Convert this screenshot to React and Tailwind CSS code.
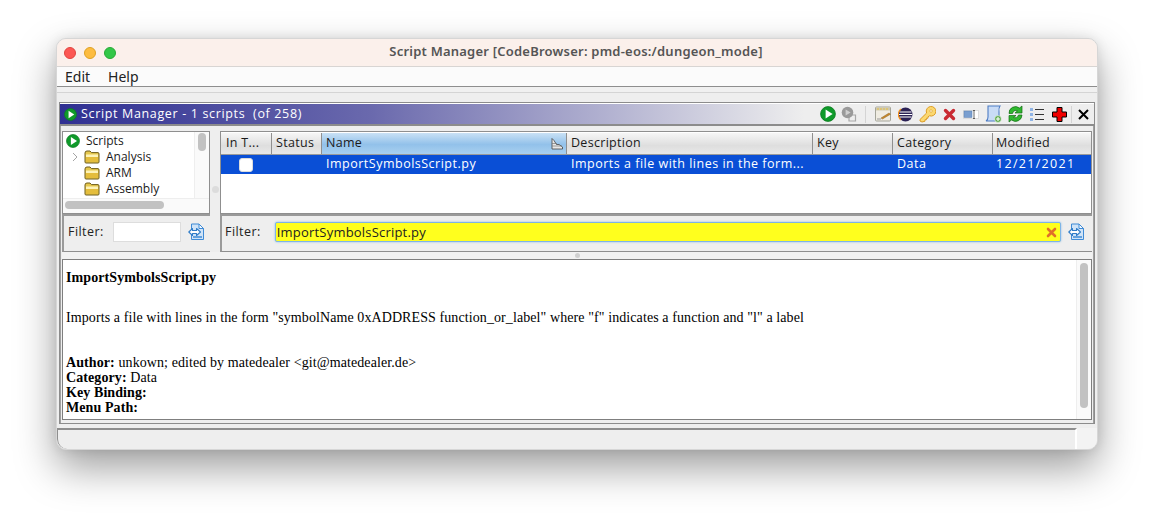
import React from "react";

const ui = { fontFamily: '"Open Sans","Noto Sans",sans-serif' };

const Play = ({ s = 14 }) => (
  <svg width={s} height={s} viewBox="0 0 16 16" className="shrink-0">
    <circle cx="8" cy="8" r="7.4" fill="#0f9a2a" stroke="#0b7a20" strokeWidth="0.8" />
    <path d="M5.6 3.4 L12.6 8 L5.6 12.6 Z" fill="#fff" />
  </svg>
);

const Folder = () => (
  <svg width="16" height="14" viewBox="0 0 16 14" className="shrink-0">
    <path d="M1 3 Q1 1 3 1 H6 L7.5 2.6 H14 Q15 2.6 15 4 V12 Q15 13 14 13 H2 Q1 13 1 12 Z" fill="#e6c84e" stroke="#6e5c1a" strokeWidth="1" />
    <path d="M2 5.5 H14 V12 H2 Z" fill="#e4bd3c" />
    <path d="M2 4.5 H14 V7 H2 Z" fill="#fdf3b8" />
  </svg>
);

const RefreshDoc = () => (
  <svg width="17" height="18" viewBox="0 0 17 18" className="shrink-0">
    <path d="M3.5 1 H11 L15.5 5.5 V16.5 H3.5 Z" fill="#cfe3f7" stroke="#3f8bd6" strokeWidth="1" />
    <path d="M11 1 V5.5 H15.5 Z" fill="#f4f9ff" stroke="#3f8bd6" strokeWidth="1" />
    <path d="M5 14 H14" stroke="#3f8bd6" strokeWidth="1.4" />
    <path d="M4.5 5.5 L0.8 9 L4.5 12.5 V10.5 H8.5 V12.5 L12.5 9 L8.5 5.5 V7.5 H4.5 Z" fill="#ffffff" stroke="#2f7cc8" strokeWidth="1.1" strokeLinejoin="round" />
  </svg>
);

const Tool = ({ children }) => <div className="w-[22px] flex justify-center">{children}</div>;

const ToolbarIcons = () => (
  <div className="flex items-center">
    <div className="w-[21px] flex justify-center"><Play s={16} /></div>
    <div className="w-[21px] flex justify-center">
      <svg width="16" height="16" viewBox="0 0 16 16">
        <path d="M8 9 H14.5 V15 H8 Z" fill="none" stroke="#a8a8a8" strokeWidth="1.2" />
        <circle cx="6.5" cy="6.5" r="5.8" fill="#9a9a9a" />
        <path d="M4.6 3.4 L9.6 6.5 L4.6 9.6 Z" fill="#cfcfcf" />
      </svg>
    </div>
    <div className="w-[1px] h-[17px] bg-[#d4d4d4] mx-[6px]" />
    <Tool>
      <svg width="17" height="16" viewBox="0 0 17 16">
        <rect x="0.5" y="1" width="15" height="14" rx="1" fill="#efece2" stroke="#a5a59a" />
        <rect x="1" y="1.5" width="14" height="3" fill="#cfc9b0" />
        <path d="M2 3 H14" stroke="#e8c040" strokeDasharray="2 1" />
        <path d="M6 12 L14 7 L15.5 8.2 L7.5 13 Z" fill="#c98a2a" stroke="#7a5418" strokeWidth="0.4" />
        <path d="M2 13 H6" stroke="#999" />
      </svg>
    </Tool>
    <Tool>
      <svg width="15" height="15" viewBox="0 0 15 15">
        <circle cx="7.5" cy="7.5" r="7" fill="#2c2255" />
        <path d="M1.5 5 H13.5 M0.8 7.5 H14.2 M1.5 10 H13.5" stroke="#fff" strokeWidth="1.1" />
        <path d="M3 2 A7 7 0 0 0 3 13" fill="none" stroke="#f7941e" strokeWidth="1.2" />
      </svg>
    </Tool>
    <Tool>
      <svg width="17" height="17" viewBox="0 0 17 17">
        <path d="M1 13.5 L7.6 7 A4.8 4.8 0 1 1 10.5 9.8 L9 10.8 V12.2 H7.5 V13.7 H6 V15.2 L3 16 L1 15 Z" fill="#fbd870" stroke="#dc9c25" strokeWidth="1" />
        <circle cx="12" cy="5" r="1.3" fill="#fff6d8" stroke="#dc9c25" strokeWidth="0.6" />
      </svg>
    </Tool>
    <Tool>
      <svg width="13" height="13" viewBox="0 0 13 13">
        <path d="M2.5 2.5 L10.5 10.5 M10.5 2.5 L2.5 10.5" stroke="#c92a32" strokeWidth="3.4" strokeLinecap="round" />
      </svg>
    </Tool>
    <Tool>
      <svg width="16" height="9" viewBox="0 0 16 9">
        <rect x="0.5" y="0.5" width="15" height="8" fill="#fff" stroke="#dcdcdc" />
        <rect x="1" y="1" width="8" height="6.5" fill="#7a9fd0" stroke="#5a7fb0" strokeWidth="0.5" />
        <path d="M10 0.5 H12 M11 0.5 V8.5 M10 8.5 H12" stroke="#444" strokeWidth="0.8" />
      </svg>
    </Tool>
    <Tool>
      <svg width="17" height="18" viewBox="0 0 17 18">
        <path d="M3 1 H15 Q13.5 3 14 7 V13 Q14 16 11 16 H1 Q3 15 3 12 Z" fill="#c9dcf6" stroke="#4d7cc4" strokeWidth="1.1" />
        <circle cx="13" cy="14" r="3.4" fill="#5aa94a" stroke="#fff" strokeWidth="0.6" />
        <path d="M13 12 V16 M11 14 H15" stroke="#fff" strokeWidth="1.1" />
      </svg>
    </Tool>
    <Tool>
      <svg width="17" height="18" viewBox="0 0 16 18">
        <path d="M1.5 8.5 A6.5 6.5 0 0 1 12 3 L14.5 1 V8 H7.5 L10 5.8 A3.6 3.6 0 0 0 5 8.5 Z" fill="#2fb82f" stroke="#146a14" strokeWidth="0.7" />
        <path d="M14.5 10 A6.5 6.5 0 0 1 4 15 L1.5 17 V10.5 H8.5 L6 12.4 A3.6 3.6 0 0 0 11 10 Z" fill="#2fb82f" stroke="#146a14" strokeWidth="0.7" />
      </svg>
    </Tool>
    <Tool>
      <svg width="14" height="13" viewBox="0 0 14 13">
        <rect x="0" y="0" width="3" height="3" fill="#8fb4e6" />
        <rect x="0" y="5" width="3" height="3" fill="#8fb4e6" />
        <rect x="0" y="10" width="3" height="3" fill="#8fb4e6" />
        <path d="M5 1.5 H14 M5 6.5 H14 M5 11.5 H14" stroke="#333" strokeWidth="1" />
      </svg>
    </Tool>
    <Tool>
      <svg width="15" height="15" viewBox="0 0 15 15">
        <path d="M5 0.5 H10 V5 H14.5 V10 H10 V14.5 H5 V10 H0.5 V5 H5 Z" fill="#f00000" stroke="#000" strokeWidth="1" />
      </svg>
    </Tool>
    <div className="w-[1px] h-[17px] bg-[#d4d4d4] ml-[1px] mr-[5px]" />
    <div className="w-[12px] flex justify-center">
      <svg width="11" height="11" viewBox="0 0 11 11">
        <path d="M1 1 L10 10 M10 1 L1 10" stroke="#000" strokeWidth="2" />
      </svg>
    </div>
  </div>
);

const columns = [
  { h: "In T...", w: "w-[51px]", p: "pl-[5px]" },
  { h: "Status", w: "w-[50px]", p: "pl-[4px]" },
  { h: "Name", w: "w-[245px]", p: "pl-[4px]", v: "ImportSymbolsScript.py", sort: true, t: "tracking-[0.5px]" },
  { h: "Description", w: "w-[246px]", p: "pl-[4px]", v: "Imports a file with lines in the form...", t: "tracking-[0.5px]" },
  { h: "Key", w: "w-[80px]", p: "pl-[4px]" },
  { h: "Category", w: "w-[100px]", p: "pl-[4px]", v: "Data", t: "tracking-[0.5px]" },
  { h: "Modified", w: "flex-1", p: "pl-[3px]", v: "12/21/2021", t: "tracking-[1.3px]" },
];

const Filter = ({ children, className, pad }) => (
  <div className={`flex items-center h-[38px] pb-[3px] bg-[#eeeeee] border-t-2 border-l-2 border-[#9a9a9a] border-b border-b-[#8f8f8f] ${className}`}>
    <span className={`text-[12.5px] tracking-[0.45px] text-[#222] leading-none ${pad}`}>Filter:</span>
    {children}
  </div>
);

export default function App() {
  return (
    <div className="w-[1154px] h-[524px] bg-white pl-[56px] pt-[38px] overflow-hidden" style={ui}>
      <div className="w-[1042px] h-[412px] rounded-[10px] overflow-hidden bg-[#eeeeee] border border-[#d6d6d6] shadow-[0_18px_40px_rgba(0,0,0,0.38),0_0_12px_rgba(0,0,0,0.1)] flex flex-col box-border relative">
        {/* title bar */}
        <div className="h-[28px] shrink-0 bg-[#fbf0eb] border-b border-[#d8d5d3] flex items-center relative">
          <div className="flex gap-[8px] pl-[7px]">
            <span className="w-[12px] h-[12px] rounded-full bg-[#fc5753] border border-[#e0443e]" />
            <span className="w-[12px] h-[12px] rounded-full bg-[#fdbc40] border border-[#dea123]" />
            <span className="w-[12px] h-[12px] rounded-full bg-[#33c748] border border-[#27aa35]" />
          </div>
          <div className="flex-1 text-center text-[13px] font-semibold text-[#555555] pr-[61px] pb-[2px] tracking-[0.22px] whitespace-nowrap" style={{ fontFamily: '"Noto Sans",sans-serif' }}>
            Script Manager [CodeBrowser: pmd-eos:/dungeon_mode]
          </div>
        </div>
        {/* menu */}
        <div className="h-[20px] shrink-0 bg-[#fbfbfb] border-b border-[#8e8e8e] flex items-center pl-[8px] gap-[18px] text-[14px] text-[#222]" style={{ fontFamily: '"Noto Sans",sans-serif' }}>
          <span>Edit</span>
          <span>Help</span>
        </div>
        <div className="h-[6px] shrink-0 bg-[#f0f0f0] border-b border-[#d4d4d4]" />
        <div className="h-[9px] shrink-0 bg-[#eeeeee]" />
        {/* panel */}
        <div className="mx-[2px] w-[1036px] h-[322px] shrink-0 flex flex-col border border-[#8c8c8c]">
          <div className="h-[23px] shrink-0 flex items-center justify-between pl-[4px] pr-[5px] border-t border-white bg-[linear-gradient(90deg,#2f3092_0%,#6a69ad_30%,#eeeeee_72%,#eeeeee_100%)] border-b-2 border-b-[#8c8c8c]">
            <div className="flex items-center gap-[4px]">
              <Play s={13} />
              <span className="text-[12.5px] text-white tracking-[0.65px] whitespace-pre leading-none">Script Manager - 1 scripts  (of 258)</span>
            </div>
            <ToolbarIcons />
          </div>
          <div className="flex-1 flex flex-col border-l border-r border-[#a0a0a0] p-[1px] min-h-0">
            {/* top split */}
            <div className="h-[125px] shrink-0 flex">
              <div className="w-[148px] shrink-0 flex flex-col pt-[4px]">
                <div className="h-[83px] shrink-0 bg-white border border-[#8f8f8f] flex flex-col overflow-hidden">
                  <div className="flex-1 flex min-h-0">
                    <div className="flex-1 pl-[3px] pt-[1px] text-[12px] text-[#1a1a1a] leading-[16px] min-w-0">
                      <div className="flex items-center gap-[6px] h-[16px]"><Play s={14} /><span>Scripts</span></div>
                      {["Analysis", "ARM", "Assembly"].map((t, i) => (
                        <div key={t} className="flex items-center h-[16px]">
                          <span className="w-[18px] flex justify-center">
                            {i === 0 && (
                              <svg width="6" height="10" viewBox="0 0 6 10">
                                <path d="M1 1 L5 5 L1 9" fill="none" stroke="#a5a5a5" strokeWidth="1" />
                              </svg>
                            )}
                          </span>
                          <Folder />
                          <span className="ml-[6px]">{t}</span>
                        </div>
                      ))}
                    </div>
                    <div className="w-[15px] shrink-0 bg-[#fafafa] border-l border-[#eeeeee] pt-[1px] flex justify-center">
                      <div className="w-[8px] h-[18px] rounded-[4px] bg-[#c2c2c2]" />
                    </div>
                  </div>
                  <div className="h-[15px] shrink-0 bg-[#fafafa] border-t border-[#eeeeee] pl-[2px] pt-[2px]">
                    <div className="w-[99px] h-[8px] rounded-[4px] bg-[#c2c2c2]" />
                  </div>
                </div>
                <Filter className="w-[148px]" pad="pl-[4px]">
                  <div className="w-[68px] h-[20px] ml-[9px] bg-white border border-[#dddddd]" />
                  <span className="ml-[7px]"><RefreshDoc /></span>
                </Filter>
              </div>
              <div className="w-[10px] shrink-0 flex flex-col items-center justify-center">
                <div className="w-[7px] h-[7px] rounded-full bg-[#dcdcdc]" />
              </div>
              <div className="flex-1 flex flex-col pt-[4px] min-w-0">
                <div className="h-[83px] shrink-0 bg-white border border-[#8f8f8f] flex flex-col pt-[1px]">
                  <div className="flex h-[22px] shrink-0 text-[12.5px] tracking-[0.3px] text-[#1a1a1a] border-b border-[#9a9a9a]">
                    {columns.map((c) => (
                      <div key={c.h} className={`${c.w} ${c.p} shrink-0 flex items-center justify-between pr-[3px] border-r border-[#8f8f8f] last:border-r-0 ${c.sort ? "bg-[linear-gradient(180deg,#c9e1f5_0%,#92c1ea_55%,#a9d0f0_100%)]" : "bg-[linear-gradient(180deg,#f6f6f6_0%,#dedede_60%,#e8e8e8_100%)]"}`}>
                        <span className="whitespace-nowrap leading-none">{c.h}</span>
                        {c.sort && (
                          <svg width="12" height="12" viewBox="0 0 12 12">
                            <path d="M1 0.5 V11 H11.5 V9 L8 6.5 H5.5 L3 2.5 L1 0.5 Z" fill="#e8e8e8" stroke="#444" strokeWidth="0.8" />
                            <path d="M1 8 H11 M1 5.5 H6" stroke="#777" strokeWidth="0.7" />
                          </svg>
                        )}
                      </div>
                    ))}
                  </div>
                  <div className="flex h-[19px] shrink-0 bg-[#0a4fd6] text-white text-[12.5px]">
                    {columns.map((c, i) => (
                      <div key={c.h} className={`${c.w} ${c.p} shrink-0 flex items-center whitespace-nowrap overflow-hidden`}>
                        {i === 0 ? (
                          <span className="ml-[13px] w-[14px] h-[14px] rounded-[3px] bg-white border border-[#dcdcdc]" />
                        ) : (
                          <span className={`leading-none ${c.t || ""}`}>{c.v}</span>
                        )}
                      </div>
                    ))}
                  </div>
                </div>
                <Filter pad="pl-[3px]">
                  <div className="flex-1 h-[20px] ml-[14px] bg-[#ffff1e] rounded-[2px] border border-[#7db4e8] shadow-[0_0_2px_#7db4e8] flex items-center justify-between pl-[1px] pr-[3px]">
                    <span className="text-[13px] text-[#222] tracking-[0.2px] leading-none">ImportSymbolsScript.py</span>
                    <svg width="11" height="11" viewBox="0 0 11 11">
                      <path d="M2 2 L9 9 M9 2 L2 9" stroke="#e07028" strokeWidth="2.6" strokeLinecap="round" />
                    </svg>
                  </div>
                  <span className="mx-[7px]"><RefreshDoc /></span>
                </Filter>
              </div>
            </div>
            {/* divider */}
            <div className="h-[7px] shrink-0 flex justify-center items-center bg-[#f2f2f2]">
              <div className="w-[5px] h-[5px] rounded-full bg-[#d0d0d0]" />
            </div>
            {/* description */}
            <div className="h-[161px] shrink-0 bg-white border border-[#7f7f7f] flex overflow-hidden">
              <div className="flex-1 pl-[3px] pt-[10px] text-[14px] leading-[15px] text-black tracking-[0.09px]" style={{ fontFamily: '"Liberation Serif",serif' }}>
                <div className="font-bold">ImportSymbolsScript.py</div>
                <div className="mt-[25px]">Imports a file with lines in the form "symbolName 0xADDRESS function_or_label" where "f" indicates a function and "l" a label</div>
                <div className="mt-[30px]"><b>Author:</b> unkown; edited by matedealer &lt;git@matedealer.de&gt;</div>
                <div><b>Category:</b> Data</div>
                <div><b>Key Binding:</b></div>
                <div><b>Menu Path:</b></div>
              </div>
              <div className="w-[15px] shrink-0 bg-[#fafafa] border-l border-[#eeeeee] pt-[3px] flex justify-center">
                <div className="w-[8px] h-[145px] rounded-[4px] bg-[#c2c2c2]" />
              </div>
            </div>
          </div>
        </div>
        {/* status */}
        <div className="flex-1 flex min-h-0 mt-[4px]">
          <div className="w-[1020px] bg-[#eeeeee] border-t-2 border-t-[#8e8e8e] border-l border-[#8e8e8e] border-r-2 border-r-white rounded-bl-[10px]" />
          <div className="flex-1 bg-[#f3f3f3]" />
        </div>
      </div>
    </div>
  );
}
